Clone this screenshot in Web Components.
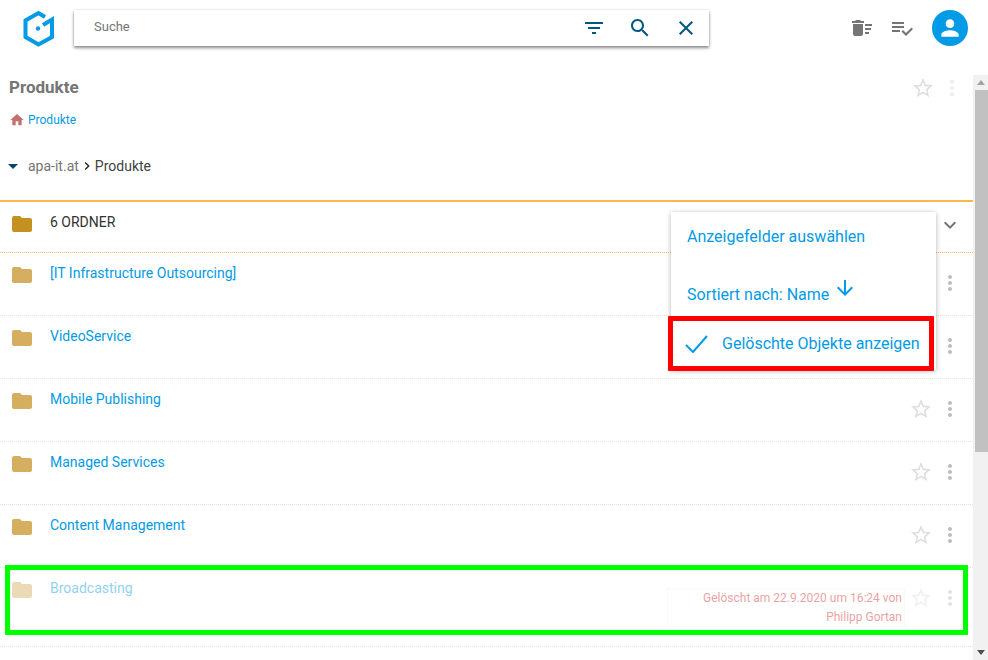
<!DOCTYPE html>
<html lang="de">
<head>
<meta charset="utf-8">
<title>Produkte</title>
<style>
  html, body { margin: 0; height: 100%; overflow: hidden; background: #fff; }
  body { font-family: Roboto, "Liberation Sans", sans-serif; }
</style>
</head>
<body>
<app-shell>
  <app-header slot="header"></app-header>
  <page-head title="Produkte"></page-head>
  <tree-path root="apa-it.at" current="Produkte"></tree-path>
  <folder-list>
    <folder-group label="6 ORDNER"></folder-group>
    <folder-row name="[IT Infrastructure Outsourcing]" nostar></folder-row>
    <folder-row name="VideoService" nostar></folder-row>
    <folder-row name="Mobile Publishing"></folder-row>
    <folder-row name="Managed Services"></folder-row>
    <folder-row name="Content Management"></folder-row>
    <folder-row name="Broadcasting" deleted="Gelöscht am 22.9.2020 um 16:24 von Philipp Gortan"></folder-row>
  </folder-list>
  <options-menu slot="overlay"></options-menu>
  <mark-box slot="overlay" color="#ff0000" style="left:668px;top:241px;width:256px;height:45px"></mark-box>
  <mark-box slot="overlay" color="#00ff00" style="left:5px;top:490px;width:953px;height:60px"></mark-box>
</app-shell>

<script>
const ICONS = {
  filter: 'M10 18h4v-2h-4v2zM3 6v2h18V6H3zm3 7h12v-2H6v2z',
  search: 'M15.5 14h-.79l-.28-.27C15.41 12.59 16 11.11 16 9.5 16 5.91 13.09 3 9.5 3S3 5.91 3 9.5 5.91 16 9.5 16c1.61 0 3.09-.59 4.23-1.57l.27.28v.79l5 4.99L20.49 19l-4.99-5zm-6 0C7.01 14 5 11.99 5 9.5S7.01 5 9.5 5 14 7.01 14 9.5 11.99 14 9.5 14z',
  close: 'M19 6.41L17.59 5 12 10.59 6.41 5 5 6.41 10.59 12 5 17.59 6.41 19 12 13.41 17.59 19 19 17.59 13.41 12z',
  sweep: 'M15 16h4v2h-4zm0-8h7v2h-7zm0 4h6v2h-6zM3 18c0 1.1.9 2 2 2h6c1.1 0 2-.9 2-2V8H3v10zM14 5h-3l-1-1H6L5 5H2v2h12z',
  checklist: 'M14 10H2v2h12v-2zm0-4H2v2h12V6zM2 16h8v-2H2v2zm19.5-4.5L23 13l-6.99 7-4.51-4.5L13 14l3.01 3 5.49-5.5z',
  person: 'M12 12c2.21 0 4-1.79 4-4s-1.79-4-4-4-4 1.79-4 4 1.79 4 4 4zm0 2c-2.67 0-8 1.34-8 4v2h16v-2c0-2.66-5.33-4-8-4z',
  star: 'M22 9.24l-7.19-.62L12 2 9.19 8.63 2 9.24l5.46 4.73L5.82 21 12 17.27 18.18 21l-1.63-7.03L22 9.24zM12 15.4l-3.76 2.27 1-4.28-3.32-2.88 4.38-.38L12 6.1l1.71 4.04 4.38.38-3.32 2.88 1 4.28L12 15.4z',
  more: 'M12 8c1.1 0 2-.9 2-2s-.9-2-2-2-2 .9-2 2 .9 2 2 2zm0 2c-1.1 0-2 .9-2 2s.9 2 2 2 2-.9 2-2-.9-2-2-2zm0 6c-1.1 0-2 .9-2 2s.9 2 2 2 2-.9 2-2-.9-2-2-2z',
  folder: 'M10 4H4c-1.1 0-1.99.9-1.99 2L2 18c0 1.1.9 2 2 2h16c1.1 0 2-.9 2-2V8c0-1.1-.9-2-2-2h-8l-2-2z',
  home: 'M10 20v-6h4v6h5v-8h3L12 3 2 12h3v8z',
  expand: 'M16.59 8.59L12 13.17 7.41 8.59 6 10l6 6 6-6z',
  down: 'M20 12l-1.41-1.41L13 16.17V4h-2v12.17l-5.58-5.59L4 12l8 8 8-8z',
  chevron: 'M10 6L8.59 7.41 13.17 12l-4.58 4.59L10 18l6-6z',
  drop: 'M7 10l5 5 5-5z'
};

class MatIcon extends HTMLElement {
  connectedCallback() {
    const size = this.getAttribute('size') || 24;
    this.attachShadow({ mode: 'open' });
    this.shadowRoot.innerHTML = `
      <style>
        :host { display: block; width: ${size}px; height: ${size}px; flex: none; color: ${this.getAttribute('color') || 'currentColor'}; }
        svg { display: block; width: 100%; height: 100%; fill: currentColor; }
      </style>
      <svg viewBox="0 0 24 24"><path d="${ICONS[this.getAttribute('name')]}"/></svg>`;
  }
}
customElements.define('mat-icon', MatIcon);

class AppShell extends HTMLElement {
  connectedCallback() {
    this.attachShadow({ mode: 'open' });
    this.shadowRoot.innerHTML = `
      <style>
        :host { display: flex; flex-direction: column; height: 660px; }
        .main { display: flex; flex: 1; min-height: 0; position: relative; }
        .content { flex: 1; min-width: 0; }
        .bar { width: 15px; background: #f1f1f1; display: flex; flex-direction: column; align-items: center; }
        .arrow { height: 15px; flex: none; display: flex; align-items: center; justify-content: center; }
        .thumb { width: 13px; height: 362px; margin-left: 1px; background: #c1c1c1; }
        .rest { flex: 1; }
        .up { border: 4px solid transparent; border-top: 0; border-bottom: 5px solid #a3a3a3; }
        .dn { border: 4px solid transparent; border-bottom: 0; border-top: 5px solid #505050; }
      </style>
      <slot name="header"></slot>
      <div class="main">
        <div class="content"><slot></slot></div>
        <div class="bar">
          <div class="arrow"><div class="up"></div></div>
          <div class="thumb"></div>
          <div class="rest"></div>
          <div class="arrow"><div class="dn"></div></div>
        </div>
        <slot name="overlay"></slot>
      </div>`;
  }
}
customElements.define('app-shell', AppShell);

class AppHeader extends HTMLElement {
  connectedCallback() {
    this.attachShadow({ mode: 'open' });
    this.shadowRoot.innerHTML = `
      <style>
        :host { display: flex; height: 75px; box-sizing: border-box; padding: 10px 20px 0 23px; align-items: flex-start; }
        .logo { width: 32px; height: 38px; margin-right: 19px; flex: none; }
        .search { width: 635px; height: 36px; box-sizing: border-box; display: flex; align-items: center; padding-left: 20px;
          background: #fff; box-shadow: 0 2px 3px rgba(0,0,0,.45), 0 0 2px rgba(0,0,0,.12); color: #00577f; }
        .search span { flex: 1; font-size: 13px; color: #757575; margin-top: -3px; }
        .search mat-icon + mat-icon { margin-left: 22px; }
        .search mat-icon:last-child { margin-right: 11px; }
        .tools { margin-left: auto; display: flex; align-items: center; color: #757575; height: 36px; }
        .tools mat-icon + mat-icon { margin-left: 16px; }
        .avatar { width: 36px; height: 36px; border-radius: 50%; background: #039be5; margin-left: 18px; display: flex; align-items: center; justify-content: center; color: #fff; }
      </style>
      <svg class="logo" viewBox="0 0 32 38" fill="none" stroke="#039be5" stroke-width="4">
        <path d="M22 7 15.5 3 2.5 10.5V27L15.5 34.5 29 27V9.5L20 15"/>
        <circle cx="15" cy="18.5" r="2.2" fill="#039be5" stroke="none"/>
      </svg>
      <div class="search">
        <span>Suche</span>
        <mat-icon name="filter"></mat-icon>
        <mat-icon name="search"></mat-icon>
        <mat-icon name="close"></mat-icon>
      </div>
      <div class="tools">
        <mat-icon name="sweep"></mat-icon>
        <mat-icon name="checklist"></mat-icon>
        <div class="avatar"><mat-icon name="person" size="26"></mat-icon></div>
      </div>`;
  }
}
customElements.define('app-header', AppHeader);

class PageHead extends HTMLElement {
  connectedCallback() {
    const title = this.getAttribute('title');
    this.attachShadow({ mode: 'open' });
    this.shadowRoot.innerHTML = `
      <style>
        :host { display: block; }
        .top { display: flex; align-items: center; height: 24px; padding: 0 9px; }
        h1 { flex: 1; margin: 0; font-size: 17px; font-weight: 700; color: #757575; }
        .top mat-icon { color: #dedede; margin-top: 1px; }
        .top mat-icon + mat-icon { margin-left: 5px; color: #eeeeee; }
        .crumb { display: flex; align-items: center; height: 18px; margin-top: 12px; padding-left: 9px; font-size: 12px; color: #039be5; }
        .crumb mat-icon { margin-right: 3px; color: #c46f6f; }
      </style>
      <div class="top">
        <h1>${title}</h1>
        <mat-icon name="star"></mat-icon>
        <mat-icon name="more"></mat-icon>
      </div>
      <div class="crumb"><mat-icon name="home" size="16"></mat-icon>${title}</div>`;
  }
}
customElements.define('page-head', PageHead);

class TreePath extends HTMLElement {
  connectedCallback() {
    this.attachShadow({ mode: 'open' });
    this.shadowRoot.innerHTML = `
      <style>
        :host { display: flex; align-items: center; height: 24px; margin: 25px 0 22px; padding-left: 1px; font-size: 14px; color: #757575; }
        b { font-weight: 400; color: #424242; }
        .root { margin-left: 3px; }
      </style>
      <mat-icon name="drop" color="#00466b"></mat-icon>
      <span class="root">${this.getAttribute('root')}</span>
      <mat-icon name="chevron" size="16" color="#222"></mat-icon>
      <b>${this.getAttribute('current')}</b>`;
  }
}
customElements.define('tree-path', TreePath);

class FolderList extends HTMLElement {
  connectedCallback() {
    this.attachShadow({ mode: 'open' });
    this.shadowRoot.innerHTML = `
      <style>:host { display: block; border-top: 2px solid #ffb74d; }</style>
      <slot></slot>`;
  }
}
customElements.define('folder-list', FolderList);

class FolderGroup extends HTMLElement {
  connectedCallback() {
    this.attachShadow({ mode: 'open' });
    this.shadowRoot.innerHTML = `
      <style>
        :host { display: flex; height: 50px; box-sizing: content-box; border-bottom: 1px dotted #ffb74d; padding: 0 11px 0 10px; font-size: 14px; color: #333; }
        .icon { margin-top: 10px; color: #c49020; }
        span { flex: 1; margin: 11px 0 0 16px; line-height: 18px; }
        .more { margin-top: 11px; color: #757575; }
      </style>
      <mat-icon class="icon" name="folder"></mat-icon>
      <span>${this.getAttribute('label')}</span>
      <mat-icon class="more" name="expand"></mat-icon>`;
  }
}
customElements.define('folder-group', FolderGroup);

class FolderRow extends HTMLElement {
  connectedCallback() {
    const deleted = this.getAttribute('deleted');
    const star = this.hasAttribute('nostar') ? '<div class="gap"></div>' : '<mat-icon class="star" name="star"></mat-icon>';
    this.attachShadow({ mode: 'open' });
    this.shadowRoot.innerHTML = `
      <style>
        :host { display: flex; height: 62px; border-bottom: 1px dotted #e4e4e4; padding: 0 11px 0 10px; font-size: 14px; }
        :host([deleted]) { height: 78px; align-items: flex-start; }
        .icon { margin-top: 10px; color: #d6ae60; }
        .name { flex: 1; margin: 11px 0 0 16px; line-height: 18px; color: #039be5; }
        .star, .gap { margin-top: 18px; width: 24px; color: #dedede; }
        .dots { margin: 18px 0 0 5px; color: #bdbdbd; }
        .info { width: 238px; box-sizing: border-box; height: 39px; margin: 20px 4px 0 0; padding: 0 2px 0 0; border: 1px dotted #f3f3f3; text-align: right;
          font-size: 12px; line-height: 19px; color: #d32f2f; }
        :host([deleted]) .icon, :host([deleted]) .name, :host([deleted]) .star, :host([deleted]) .dots, :host([deleted]) .info span { opacity: .45; }
      </style>
      <mat-icon class="icon" name="folder"></mat-icon>
      <div class="name">${this.getAttribute('name')}</div>
      ${deleted ? `<div class="info"><span>${deleted}</span></div>` : ''}
      ${star}
      <mat-icon class="dots" name="more"></mat-icon>`;
  }
}
customElements.define('folder-row', FolderRow);

class OptionsMenu extends HTMLElement {
  connectedCallback() {
    this.attachShadow({ mode: 'open' });
    this.shadowRoot.innerHTML = `
      <style>
        :host { position: absolute; left: 671px; top: 137px; width: 265px; height: 158px; background: #fff;
          box-shadow: 0 1px 5px rgba(0,0,0,.3); font-size: 16px; color: #039be5; display: flex; flex-direction: column; }
        .item { display: flex; align-items: center; padding-left: 16px; white-space: nowrap; }
        .a { height: 49px; }
        .b { height: 43px; margin-top: 12px; }
        .c { height: 54px; padding-left: 14px; }
        .c svg { width: 24px; height: 18px; margin: 2px 13px 0 0; flex: none; fill: none; stroke: #039be5; stroke-width: 2; }
        .b mat-icon { margin: -14px 0 0 4px; }
      </style>
      <div class="item a">Anzeigefelder auswählen</div>
      <div class="item b">Sortiert nach: Name <mat-icon name="down"></mat-icon></div>
      <div class="item c"><svg viewBox="0 0 24 18"><path d="M1 10l7 7L22 1"/></svg>Gelöschte Objekte anzeigen</div>`;
  }
}
customElements.define('options-menu', OptionsMenu);

class MarkBox extends HTMLElement {
  connectedCallback() {
    this.attachShadow({ mode: 'open' });
    this.shadowRoot.innerHTML = `
      <style>
        :host { position: absolute; display: block; box-sizing: content-box; border: 5px solid ${this.getAttribute('color')}; border-radius: 1px; pointer-events: none; }
      </style>`;
  }
}
customElements.define('mark-box', MarkBox);
</script>
</body>
</html>
